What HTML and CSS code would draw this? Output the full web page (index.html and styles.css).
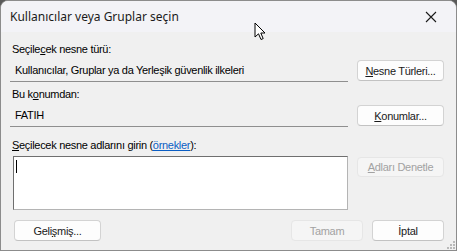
FILE: index.html
```html
<!DOCTYPE html>
<html>
  <head>
    <title>Kullanıcılar veya Gruplar seçin</title>
    <link rel="stylesheet" href="styles.css">
  </head>
  <body>
    <div class="window">
      <!-- Title bar -->
      <div class="titlebar">
        <span class="title">Kullanıcılar veya Gruplar seçin</span>
        <span class="close">
          <svg width="12" height="12" viewBox="0 0 12 12">
            <path d="M1 1 L11 11 M11 1 L1 11" stroke="#1a1a1a" stroke-width="1.1" fill="none"/>
          </svg>
        </span>
      </div>

      <div class="content">
        <div class="label">Seçile<u>c</u>ek nesne türü:</div>
        <div class="row">
          <div class="field">Kullanıcılar, Gruplar ya da Yerleşik güvenlik ilkeleri</div>
          <button class="btn"><u>N</u>esne Türleri...</button>
        </div>

        <div class="label label-second">Bu k<u>o</u>numdan:</div>
        <div class="row">
          <div class="field">FATIH</div>
          <button class="btn"><u>K</u>onumlar...</button>
        </div>

        <div class="label label-third"><u>S</u>eçilecek nesne adlarını girin (<span class="link">örnekler</span>):</div>
        <div class="row row-top">
          <div class="names"><span class="caret"></span></div>
          <button class="btn btn-disabled btn-check"><u>A</u>dları Denetle</button>
        </div>

        <div class="footer">
          <button class="btn btn-wide">Geli<u>ş</u>miş...</button>
          <div class="spacer"></div>
          <button class="btn btn-small btn-disabled">Tamam</button>
          <button class="btn btn-small">İptal</button>
        </div>
      </div>

      <!-- size grip -->
      <svg class="grip" width="10" height="10" viewBox="0 0 10 10">
        <rect x="7" y="1" width="2" height="2" fill="#b9b9b9"/>
        <rect x="4" y="4" width="2" height="2" fill="#b9b9b9"/>
        <rect x="7" y="4" width="2" height="2" fill="#b9b9b9"/>
        <rect x="1" y="7" width="2" height="2" fill="#b9b9b9"/>
        <rect x="4" y="7" width="2" height="2" fill="#b9b9b9"/>
        <rect x="7" y="7" width="2" height="2" fill="#b9b9b9"/>
      </svg>

      <!-- mouse pointer -->
      <svg class="pointer" width="14" height="20" viewBox="0 0 14 20">
        <path d="M1 1 L1 15 L4.5 11.8 L7 17.5 L9.2 16.6 L6.8 11 L11 11 Z" fill="#fff" stroke="#000" stroke-width="1" stroke-linejoin="round"/>
      </svg>
    </div>
  </body>
</html>
```

FILE: styles.css
```css
html, body {
  margin: 0;
  padding: 0;
  background: #5a5a5a;
}
.window {
  position: relative;
  width: 457px;
  height: 251px;
  box-sizing: border-box;
  border: 1px solid #8c8c8c;
  border-radius: 8px 8px 0 0;
  background: #f0f0f0;
  overflow: hidden;
  font-family: "Liberation Sans", Arial, sans-serif;
  font-size: 11px;
  letter-spacing: -0.3px;
  color: #000;
}
.titlebar {
  height: 31px;
  display: flex;
  align-items: center;
  justify-content: space-between;
  background: #f3f3f7;
  padding: 0 0 0 9px;
  letter-spacing: 0;
}
.title {
  font-family: "Noto Sans", sans-serif;
  font-size: 12px;
  color: #1b1b1b;
}
.close {
  width: 46px;
  height: 31px;
  display: flex;
  align-items: center;
  justify-content: center;
  margin-right: 2px;
}
.content {
  padding: 11px 12px 0 9px;
}
.label {
  line-height: 13px;
  margin: 0 0 3px 2px;
  white-space: nowrap;
}
.label-second {
  margin-top: 6px;
}
.label-third {
  margin-top: 12px;
  margin-bottom: 4px;
}
.row {
  display: grid;
  grid-template-columns: 1fr 87px;
  column-gap: 9px;
  align-items: center;
}
.row-top {
  align-items: start;
}
.field {
  height: 22px;
  line-height: 22px;
  padding-left: 5px;
  border-bottom: 1px solid #8f8f8f;
  white-space: nowrap;
  overflow: hidden;
}
.btn {
  height: 21px;
  padding: 0;
  box-sizing: border-box;
  border: 1px solid #d3d3d3;
  border-bottom-color: #c2c2c2;
  border-radius: 4px;
  background: #fdfdfd;
  font-family: "Liberation Sans", Arial, sans-serif;
  font-size: 11px;
  letter-spacing: -0.3px;
  color: #1a1a1a;
  text-align: center;
  white-space: nowrap;
}
.btn-disabled {
  background: #f5f5f5;
  border-color: #e6e6e6;
  color: #a2a2a2;
}
.btn-check {
  margin-top: 1px;
  height: 20px;
}
.names {
  height: 54px;
  margin-left: 3px;
  box-sizing: border-box;
  border: 1px solid;
  border-color: #6f6f6f #b4b4b4 #b4b4b4 #6f6f6f;
  background: #fff;
  padding: 3px 0 0 2px;
}
.caret {
  display: block;
  width: 1px;
  height: 13px;
  background: #000;
}
.link {
  color: #0b5ec4;
  text-decoration: underline;
}
.footer {
  display: flex;
  gap: 9px;
  margin: 10px 0 0 4px;
}
.spacer {
  flex: 1;
}
.btn-wide {
  width: 87px;
}
.btn-small {
  width: 72px;
}
.grip {
  position: absolute;
  right: 0;
  bottom: 0;
}
.pointer {
  position: absolute;
  left: 253px;
  top: 21px;
}
```
